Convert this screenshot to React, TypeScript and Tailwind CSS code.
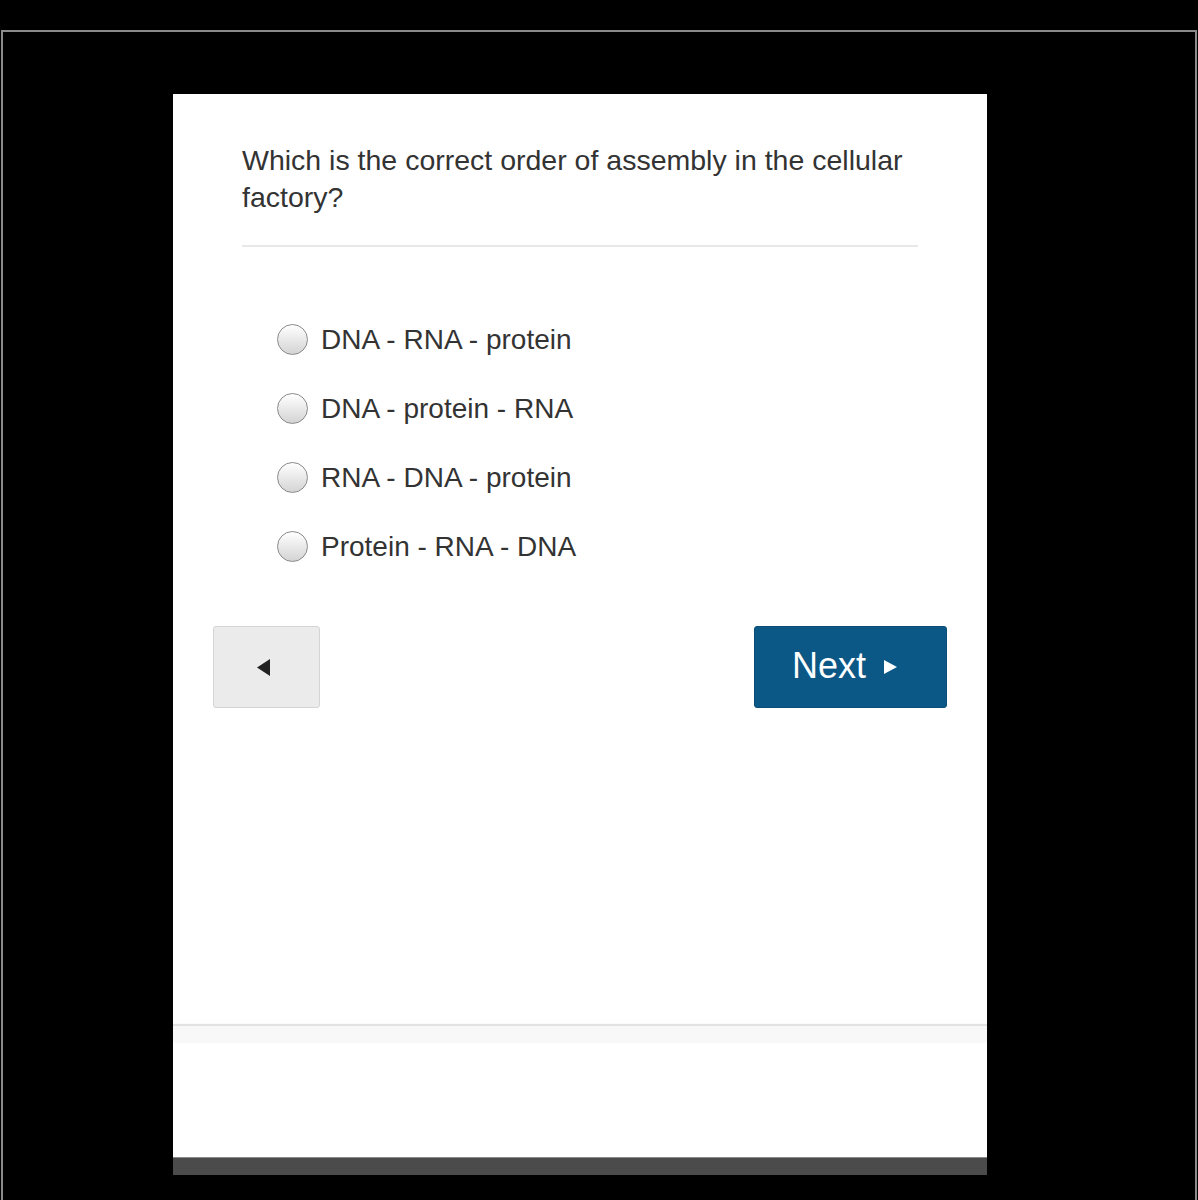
const options = [
  'DNA - RNA - protein',
  'DNA - protein - RNA',
  'RNA - DNA - protein',
  'Protein - RNA - DNA',
];

function Radio() {
  return (
    <span className="block h-[31px] w-[31px] shrink-0 rounded-full border-[1.5px] border-[#8a8a8a] bg-gradient-to-b from-white to-[#d4d4d4]"></span>
  );
}

export default function App() {
  return (
    <div className="h-[1200px] w-[1198px] overflow-hidden bg-black pt-[30px] font-['Liberation_Sans',Arial,sans-serif]">
      <div className="ml-[1px] h-[1170px] w-[1196px] border-2 border-b-0 border-[#8a8a8a] pt-[62px] pl-[170px]">
        <div className="w-[814px] bg-white">
          <div className="h-[930px] px-[69px] pt-[48px]">
            <p className="text-[28.5px] leading-[37px] text-[#333]">
              Which is the correct order of assembly in the cellular factory?
            </p>
            <div className="mt-[29px] h-[2px] bg-[#e8e8e8]"></div>
            <ul className="mt-[58px] pl-[35px]">
              {options.map((o) => (
                <li key={o} className="flex h-[69px] items-center gap-[13px]">
                  <Radio />
                  <span className="text-[28px] text-[#333]">{o}</span>
                </li>
              ))}
            </ul>
            <div className="-mx-[29px] mt-[45px] flex justify-between">
              <button className="flex h-[82px] w-[107px] items-center justify-center rounded-[3px] border border-[#d4d4d4] bg-[#ebebeb] pr-[6px]">
                <svg width="13" height="17" viewBox="0 0 13 17">
                  <path d="M13 0 L0 8.5 L13 17 Z" fill="#222" />
                </svg>
              </button>
              <button className="flex h-[82px] w-[193px] items-center justify-center gap-[18px] rounded-[3px] border border-[#0a4e78] bg-[#0b5886] pb-[2px] pr-[12px] text-[36px] text-white">
                Next
                <svg width="13" height="14" viewBox="0 0 13 14" className="mt-[2px]">
                  <path d="M0 0 L13 7 L0 14 Z" fill="#fff" />
                </svg>
              </button>
            </div>
          </div>
          <div className="h-[2px] bg-[#e2e2e2] shadow-[0_1px_3px_rgba(0,0,0,0.12)]"></div>
          <div className="h-[17px] bg-[#f8f8f8]"></div>
          <div className="h-[114px] bg-white"></div>
          <div className="h-[18px] border-t border-[#8a8a8a] bg-[#4b4b4b]"></div>
        </div>
      </div>
    </div>
  );
}
